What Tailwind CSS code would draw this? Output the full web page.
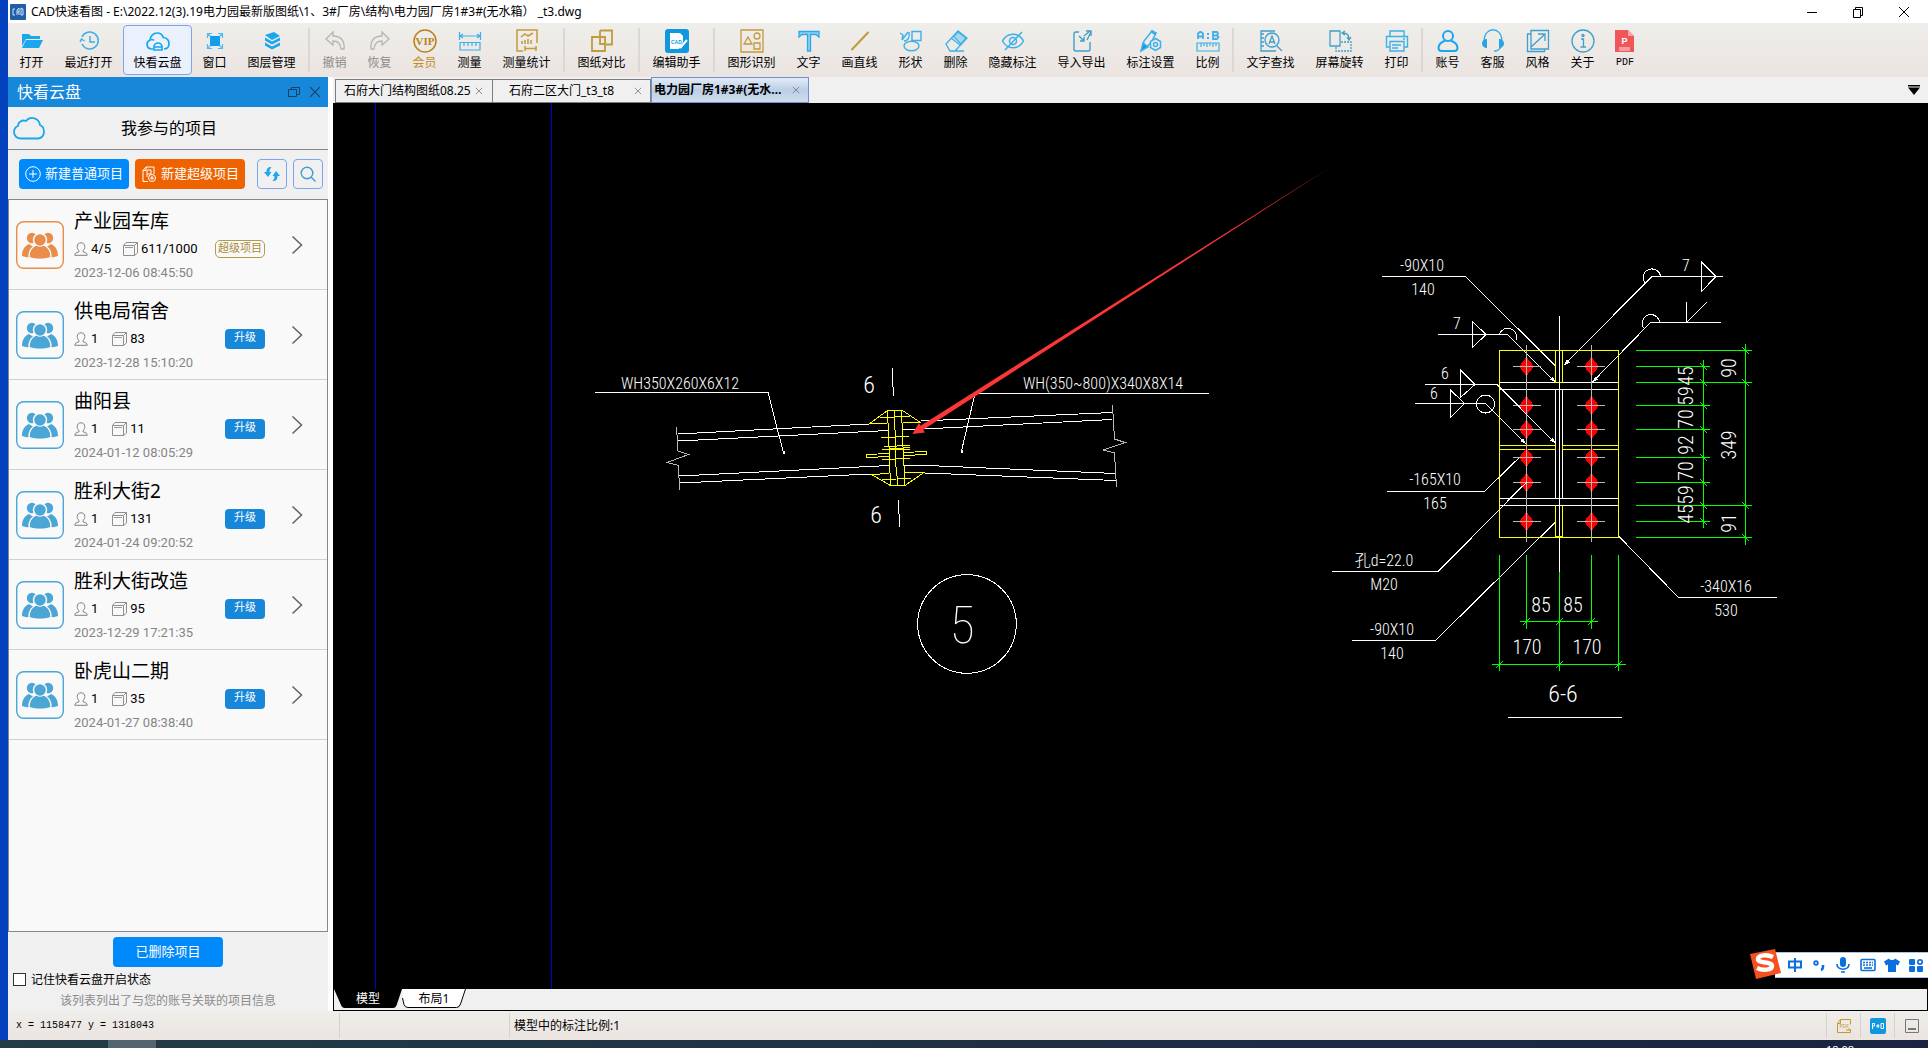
<!DOCTYPE html>
<html lang="zh-CN">
<head>
<meta charset="utf-8">
<title>CAD快速看图</title>
<script src="https://cdn.jsdelivr.net/npm/@tailwindcss/browser@4"></script>
</head>
<body class="flex h-screen flex-col overflow-hidden bg-[#0442bd] font-['Noto_Sans','Noto_Sans_CJK_SC',sans-serif] text-xs text-black">

<!-- shared symbols -->
<svg class="hidden" aria-hidden="true">
  <symbol id="team" viewBox="0 0 48 48">
    <rect x="0.7" y="0.7" width="46.6" height="46.6" rx="7" fill="none" stroke="currentColor" stroke-width="1.4"/>
    <circle cx="16" cy="17" r="5.2" fill="currentColor"/><circle cx="32" cy="17" r="5.2" fill="currentColor"/>
    <path d="M6 35c0-7 3-10 7-12l3 2h16l3-2c4 2 7 5 7 12-4 1.500-8 1.500-10 1H16c-3 .5-6 .5-10-1z" fill="currentColor"/>
    <path d="M13 36c0-7 3-10 7-12 1.500 1.500 6.500 1.500 8 0 4 2 7 5 7 12-6 2.500-16 2.500-22 0z" fill="currentColor" stroke="#f9f9f9" stroke-width="1.500"/>
    <circle cx="24" cy="19" r="6.500" fill="currentColor" stroke="#f9f9f9" stroke-width="1.500"/>
    <path d="M13.800 36c.2-6.500 3-9.500 6.500-11.200 2 1.200 5.400 1.200 7.400 0C31.200 26.500 34 29.500 34.200 36c-6 2-14.400 2-20.400 0z" fill="currentColor"/>
  </symbol>
  <symbol id="person" viewBox="0 0 14 14"><path d="M.8 13.300h12.400c0-2-1.200-2.600-4.200-3.500V8.500c1.400-1 1.800-2.500 1.800-4C10.800 2.200 9.300.8 7 .8S3.200 2.200 3.200 4.500c0 1.500.4 3 1.800 4v1.300C2 10.700.8 11.300.8 13.300z" fill="none" stroke="#808080"/></symbol>
  <symbol id="sheets" viewBox="0 0 15 15"><path d="M.5 4.500h11v10H.5zM.5 4.500l2.500-3h11.500V12L11.500 14.500M11.500 4.500l3-3" fill="none" stroke="#8f8f8f"/><path d="M2 6.500h8" stroke="#9a9a9a"/></symbol>
  <symbol id="next" viewBox="0 0 12 20"><path d="M1.500 1.500L10.500 10l-9 8.500" fill="none" stroke="#666" stroke-width="1.600"/></symbol>
  <symbol id="cross" viewBox="0 0 10 10"><path d="M1 1l8 8M9 1L1 9" fill="none" stroke="currentColor"/></symbol>
</svg>

<div class="flex min-h-0 flex-1 flex-col pl-2">

  <!-- title bar -->
  <header class="flex h-[23px] shrink-0 items-center bg-white pl-[2px]">
    <svg class="size-4" viewBox="0 0 16 16"><rect width="16" height="16" rx="1" fill="#1f5fa8"/><path d="M5 5H3v6h2M7 11V6l2-2v7M7 8h2M11 4v7h2V5z" stroke="#cfe4ff" fill="none"/></svg>
    <h1 class="flex-1 whitespace-pre pl-[5px] text-xs">CAD快速看图 - E:\2022.12(3).19电力园最新版图纸\1、3#厂房\结构\电力园厂房1#3#(无水箱） _t3.dwg</h1>
    <div class="flex items-center gap-[34px] pr-[18px]">
      <button aria-label="最小化"><svg class="size-3" viewBox="0 0 12 12"><path d="M1 6.500h10" stroke="#000"/></svg></button>
      <button aria-label="还原"><svg class="size-3" viewBox="0 0 12 12"><path d="M1.500 3.500h7v8h-7zM3.500 3.500v-2h7v8h-2" fill="none" stroke="#000"/></svg></button>
      <button aria-label="关闭"><svg class="size-3" viewBox="0 0 12 12"><path d="M1 1l10 10M11 1L1 11" stroke="#000"/></svg></button>
    </div>
  </header>

  <!-- toolbar -->
  <nav class="flex h-[54px] shrink-0 items-center whitespace-nowrap bg-linear-to-b from-[#efeeea] to-[#ebe4e1] pl-px leading-4">
    <button class="flex h-[50px] w-[45px] flex-col items-center gap-[2px] pt-1"><svg class="size-6" viewBox="0 0 24 24" fill="#1aa7ee"><path d="M2 5h7l2 2h9v3H6l-4 7z"/><path d="M6 11h17l-4 8H2z"/></svg>打开</button>
    <button class="flex h-[50px] w-[69px] flex-col items-center gap-[2px] pt-1"><svg class="size-6" viewBox="0 0 24 24" fill="none" stroke="#3bb0ea" stroke-width="1.500"><path d="M5 15a8.500 8.500 0 1 0 0-7M3 13l1.500-3L7.500 12M13 7v6h5"/></svg>最近打开</button>
    <button class="flex h-[50px] w-[69px] flex-col items-center gap-[2px] rounded-[4px] border border-[#7da4f0] bg-[#eaf1fd] pt-[3px]"><svg class="size-6" viewBox="0 0 24 24" fill="none" stroke="#1aa7ee" stroke-width="1.700"><path d="M7 20H5.500A4.500 4.500 0 0 1 4 11.300C4 7 7.500 4 11 4c3.500 0 5.500 2 6.300 4.500C21 9 23 11.500 23 14.500c0 3.500-2 5.500-5 5.500M4 11c1.500-.8 3-.5 4 .5M8 21v-3a4 4 0 0 1 8 0v3zM8 18h8"/></svg>快看云盘</button>
    <button class="flex h-[50px] w-[45px] flex-col items-center gap-[2px] pt-1"><svg class="size-6" viewBox="0 0 24 24"><rect x="7" y="7" width="10" height="10" fill="#0f9fec"/><path d="M4.500 9V4.500H9M15 4.500h4.500V9M19.500 15v4.500H15M9 19.500H4.500V15M4.500 4.500l3 3M19.500 4.500l-3 3M4.500 19.500l3-3M19.500 19.500l-3-3" fill="none" stroke="#4dbaf0" stroke-width="1.200"/></svg>窗口</button>
    <button class="flex h-[50px] w-[69px] flex-col items-center gap-[2px] pt-1"><svg class="size-6" viewBox="0 0 24 24" fill="#1aa7ee"><path d="M5 6l9-3 6 4-8 4z"/><path d="M5 8.500l7 4 8-4v3l-8 4-7-4z"/><path d="M5 13.500l7 4 8-4v3l-8 4-7-4z"/></svg>图层管理</button>
    <span class="mx-[2px] h-11 w-[2px] bg-[#dad7d4]"></span>
    <button class="flex h-[50px] w-[45px] flex-col items-center gap-[2px] pt-1 text-[#8c8c8c]"><svg class="size-6" viewBox="0 0 24 24" fill="none" stroke="#b5b5b5" stroke-width="1.300"><path d="M10 3L3 10l7 6v-4c5 0 7 2 8 8h3c1-8-3-13-11-13z"/></svg>撤销</button>
    <button class="flex h-[50px] w-[45px] flex-col items-center gap-[2px] pt-1 text-[#8c8c8c]"><svg class="size-6" viewBox="0 0 24 24" fill="none" stroke="#b5b5b5" stroke-width="1.300"><path d="M14 3l7 7-7 6v-4c-5 0-7 2-8 8H3C2 12 6 7 14 7z"/></svg>恢复</button>
    <button class="flex h-[50px] w-[45px] flex-col items-center gap-[2px] pt-1 text-[#c08d1f]"><svg class="size-6" viewBox="0 0 24 24"><circle cx="12" cy="12" r="11" fill="none" stroke="#b8841c" stroke-width="1.500"/><text x="12" y="16" text-anchor="middle" font-family="Liberation Serif" font-weight="700" font-size="11" fill="#b8841c">VIP</text></svg>会员</button>
    <button class="flex h-[50px] w-[45px] flex-col items-center gap-[2px] pt-1"><svg class="size-6" viewBox="0 0 24 24" fill="none" stroke="#3bb0ea" stroke-width="1.200"><path d="M1.500 3v8M22.500 3v8M2 7h20M5 5L2 7l3 2M19 5l3 2-3 2M2 13.500h20V21H2zM6 14v3M10 14v3M14 14v3M18 14v3"/></svg>测量</button>
    <button class="flex h-[50px] w-[69px] flex-col items-center gap-[2px] pt-1"><svg class="size-6" viewBox="0 0 24 24" fill="none" stroke="#c39a3c" stroke-width="1.500"><path d="M8 22H2V1h20v13M6 8l4-3 3 2 5-3M7 15v-3M10 15v-4M13 15v-5M16 15v-4M10 17v5M21 17v5M10 19.500h11"/></svg>测量统计</button>
    <span class="mx-[2px] h-11 w-[2px] bg-[#dad7d4]"></span>
    <button class="flex h-[50px] w-[69px] flex-col items-center gap-[2px] pt-1"><svg class="size-6" viewBox="0 0 24 24" fill="none" stroke="#c39a3c" stroke-width="1.800"><path d="M10 1.500h12v14h-6M10 1.500v6M2 8h13v14H2zM10 8v7h5"/></svg>图纸对比</button>
    <span class="mx-[2px] h-11 w-[2px] bg-[#dad7d4]"></span>
    <button class="flex h-[50px] w-[69px] flex-col items-center gap-[2px] pt-1"><svg class="size-6" viewBox="0 0 24 24"><rect width="24" height="24" rx="3" fill="#0f98e0"/><path d="M5 4h10l3 3v6l-4 7H5z" fill="#fff"/><path d="M15 19l7-8" stroke="#fff" stroke-width="2"/><text x="6" y="15" font-size="5" font-weight="700" fill="#0f98e0" font-family="Liberation Sans">CAD</text></svg>编辑助手</button>
    <span class="mx-[2px] h-11 w-[2px] bg-[#dad7d4]"></span>
    <button class="flex h-[50px] w-[69px] flex-col items-center gap-[2px] pt-1"><svg class="size-6" viewBox="0 0 24 24" fill="none" stroke="#c39a3c" stroke-width="1.300"><path d="M1 1h22v22H1zM4 15l4-7 4 7zM14 14h6v6h-6z"/><circle cx="17" cy="7" r="3"/></svg>图形识别</button>
    <button class="flex h-[50px] w-[45px] flex-col items-center gap-[2px] pt-1"><svg class="size-6" viewBox="0 0 24 24" fill="#8fd0f2" stroke="#2ea9e8" stroke-width="1.300"><path d="M2 2.500h20V8l-3-2.500h-5.500V22h-3V5.500H5L2 8z"/></svg>文字</button>
    <button class="flex h-[50px] w-[57px] flex-col items-center gap-[2px] pt-1"><svg class="size-6" viewBox="0 0 24 24" stroke="#c39a3c" stroke-width="2"><path d="M3.500 21L20.500 3"/></svg>画直线</button>
    <button class="flex h-[50px] w-[45px] flex-col items-center gap-[2px] pt-1"><svg class="size-6" viewBox="0 0 24 24" fill="none" stroke="#3bb0ea" stroke-width="1.400"><path d="M13 2.500h9v9h-9zM1 4l3 2-1 5 6-8M5 12c4 0 6-4 5-9"/><ellipse cx="12.500" cy="17" rx="7.500" ry="4.800"/></svg>形状</button>
    <button class="flex h-[50px] w-[45px] flex-col items-center gap-[2px] pt-1"><svg class="size-6" viewBox="0 0 24 24" fill="none" stroke="#3bb0ea" stroke-width="1.300"><path d="M2 15L14 2l9 7-12 13H6zM7 9l9 7M9 22h11"/><path d="M9.500 7.500L14 3l8 6-5 6z" fill="#a8d6ee"/></svg>删除</button>
    <button class="flex h-[50px] w-[69px] flex-col items-center gap-[2px] pt-1"><svg class="size-6" viewBox="0 0 24 24" fill="none" stroke="#3bb0ea" stroke-width="1.500"><path d="M1.500 12c5-9 16-9 21 0-5 9-16 9-21 0zM4 21L21 3"/><circle cx="12" cy="12" r="3.500"/></svg>隐藏标注</button>
    <button class="flex h-[50px] w-[69px] flex-col items-center gap-[2px] pt-1"><svg class="size-6" viewBox="0 0 24 24" fill="none" stroke="#3f9fcc" stroke-width="1.400"><path d="M9 3H6a2 2 0 0 0-2 2v15a2 2 0 0 0 2 2h12a2 2 0 0 0 2-2v-7M9 7l5 5M10 12h4V8M14 7l6-5M16 2h5v5M21 3l-4 8"/></svg>导入导出</button>
    <button class="flex h-[50px] w-[69px] flex-col items-center gap-[2px] pt-1"><svg class="size-6" viewBox="0 0 24 24" fill="none" stroke="#3bb0ea" stroke-width="1.500"><path d="M3 21L5 12l8-10 4 2-5 10z"/><path d="M2 22l2-8 5 4z" fill="#1a96dd"/><path d="M12 2l5 3" stroke-width="3"/><path d="M16.500 9.500l5 3v6l-5 3-5-3v-6z" fill="#eeecea"/><circle cx="16.500" cy="15.500" r="2"/></svg>标注设置</button>
    <button class="flex h-[50px] w-[45px] flex-col items-center gap-[2px] pt-1"><svg class="size-6" viewBox="0 0 24 24" fill="none" stroke="#3bb0ea" stroke-width="1.200"><path d="M1 14h22v8H1zM5 14v4M8 14v3M11 14v4M14 14v3M17 14v4M20 14v3"/><path d="M2 10V4.500L4 3h1l2 1.500V10M2 7.500h5M17 3h4l1 1.500-1 2h-4zm0 3.500h4l1.500 1.500-1.500 2h-4z" stroke-width="1.800"/><path d="M11 4h2v2h-2zM11 8h2v2h-2z" fill="#3bb0ea" stroke="none"/></svg>比例</button>
    <span class="mx-[2px] h-11 w-[2px] bg-[#dad7d4]"></span>
    <button class="flex h-[50px] w-[69px] flex-col items-center gap-[2px] pt-1"><svg class="size-6" viewBox="0 0 24 24" fill="none" stroke="#3f9fcc" stroke-width="1.300"><path d="M16 2H2v20h15M2 5h3M2 9h3M2 13h3M2 17h3M18 17l5 5M10 15l3-8 3 8M11 13h4"/><circle cx="13" cy="11" r="7"/></svg>文字查找</button>
    <button class="flex h-[50px] w-[69px] flex-col items-center gap-[2px] pt-1"><svg class="size-6" viewBox="0 0 24 24" fill="none" stroke="#3f9fcc" stroke-width="1.300"><path d="M2 2h10v15H2zM15 4c4 0 6 2 6 6M17 2l-3 2 3 2M19 8l2 3 2-3"/><path d="M13 13h10v9H8v-4" stroke-dasharray="2 1"/></svg>屏幕旋转</button>
    <button class="flex h-[50px] w-[45px] flex-col items-center gap-[2px] pt-1"><svg class="size-6" viewBox="0 0 24 24" fill="none" stroke="#3bb0ea" stroke-width="1.400"><path d="M5 7V2h14v5M5 18H1.500V7.500h21V18H19M5 12.500h14V22H5zM7 16h9M7 19h6M18 10h2"/></svg>打印</button>
    <span class="mx-[2px] h-11 w-[2px] bg-[#dad7d4]"></span>
    <button class="flex h-[50px] w-[45px] flex-col items-center gap-[2px] pt-1"><svg class="size-6" viewBox="0 0 24 24" fill="none" stroke="#1aa7ee" stroke-width="2"><circle cx="12" cy="7" r="5"/><path d="M9.500 11.500C5 13 2.500 16 2.500 19c0 2 1 3 3 3h13c2 0 3-1 3-3 0-3-2.500-6-7-7.500"/></svg>账号</button>
    <button class="flex h-[50px] w-[45px] flex-col items-center gap-[2px] pt-1"><svg class="size-6" viewBox="0 0 24 24" fill="none" stroke="#3bb0ea" stroke-width="1.300"><path d="M3 12c0-15 18-15 18 0M20 17c-1 4-3 5-7 5"/><path d="M6 10v9c-3 0-5-2-5-4.500S3 10 6 10zM18 10v9c3 0 5-2 5-4.500S21 10 18 10z" fill="#29a3e2" stroke="none"/></svg>客服</button>
    <button class="flex h-[50px] w-[45px] flex-col items-center gap-[2px] pt-1"><svg class="size-6" viewBox="0 0 24 24" fill="none" stroke="#3f9fcc" stroke-width="1.300"><path d="M5 5H1.500v17.500h17V20M5 1.500h17.500V20H5zM5 18L18 6M12 5h7v7"/></svg>风格</button>
    <button class="flex h-[50px] w-[45px] flex-col items-center gap-[2px] pt-1"><svg class="size-6" viewBox="0 0 24 24" fill="none" stroke="#3f9fcc" stroke-width="1.300"><circle cx="12" cy="12" r="11"/><path d="M10 10h2.500v8M9.500 18h5.500"/><circle cx="12" cy="6.500" r="1"/></svg>关于</button>
    <button class="flex h-[50px] w-10 flex-col items-center gap-[2px] pt-1 font-['Liberation_Mono',monospace] text-[10px]"><svg class="size-6" viewBox="0 0 24 24"><path d="M2 1h13l6 6v16H2z" fill="#f0575a"/><path d="M15 1v6h6z" fill="#f9a7a8"/><path d="M6 18h11v4H6z" fill="#f79c9d"/><text x="11.500" y="15" text-anchor="middle" font-size="9" font-weight="700" fill="#fff" font-family="Liberation Sans">P</text></svg>PDF</button>
  </nav>

  <div class="flex min-h-0 flex-1 bg-white">

    <!-- cloud drive panel -->
    <aside class="flex w-80 shrink-0 flex-col bg-[#f0f0f0]">
      <div class="flex h-[30px] items-center bg-[#1787da] pl-[9px] pr-[7px] text-base text-white">
        <h2 class="flex-1">快看云盘</h2>
        <button aria-label="浮动" class="mr-[9px]"><svg class="size-3" viewBox="0 0 12 12" fill="none" stroke="#16406b"><path d="M.5 3.500h8v7h-8zM3.500 3.500v-2h8v7h-3"/></svg></button>
        <button aria-label="关闭面板" class="text-[#16406b]"><svg class="size-3"><use href="#cross"/></svg></button>
      </div>
      <div class="flex h-[43px] items-center border-b border-[#828790] pl-[5px] pr-[35px]">
        <svg class="h-6 w-8" viewBox="0 0 32 24" fill="none" stroke="#1aa7ee" stroke-width="1.800"><path d="M8 22.500C4 22.500 1 20 1 16c0-3 1.500-5 4-6 0-4 4-6.500 8-5 4.500-5.500 13-3 14 4 2.500 1 4 3.500 4 7 0 4-3 6.500-6 6.500z"/></svg>
        <h3 class="flex-1 text-center text-base">我参与的项目</h3>
      </div>
      <div class="flex h-[49px] items-center pb-px pl-[11px] pr-[5px] text-[13px] text-white">
        <button class="flex h-[30px] w-[110px] items-center justify-center gap-1 rounded-[4px] bg-[#0089fa]"><svg class="size-4" viewBox="0 0 16 16" fill="none" stroke="#fff"><circle cx="8" cy="8" r="7.300"/><path d="M8 4v8M4 8h8"/></svg>新建普通项目</button>
        <button class="ml-[6px] flex h-[30px] w-[110px] items-center justify-center gap-1 rounded-[4px] bg-[#ee6300]"><svg class="size-4" viewBox="0 0 16 16" fill="none" stroke="#fff"><path d="M7 15.500H2v-11l3-3.500h8v7M5 1v3.500H2M6 4h4v4H6zM6 11V8"/><circle cx="11" cy="12" r="3.500"/><path d="M11 10v4M9 12h4"/></svg>新建超级项目</button>
        <button aria-label="刷新" class="ml-3 flex size-[30px] items-center justify-center rounded-[4px] border border-[#7da4f0]"><svg class="size-4" viewBox="0 0 16 16" fill="#1aa7ee"><path d="M7.500 1C3.500 1 2.500 3 2.500 6H0l4 5 3.500-5H5.500c0-2 .5-3.500 2-5z"/><path d="M8.500 15c4 0 5-2 5-5H16l-4-5-3.500 5h2c0 2-.5 3.500-2 5z"/></svg></button>
        <button aria-label="搜索" class="ml-[6px] flex size-[30px] items-center justify-center rounded-[4px] border border-[#7da4f0]"><svg class="size-4" viewBox="0 0 16 16" fill="none" stroke="#3f9fd0" stroke-width="1.400"><circle cx="7" cy="7" r="5.800"/><path d="M11 11l4.500 4.500"/></svg></button>
      </div>

      <ul class="min-h-0 flex-1 border border-[#828790] bg-[#f9f9f9]">
        <li class="flex h-[90px] items-center border-b border-[#d0d0d0] pl-[7px] pr-6">
          <svg class="size-12 text-[#e88d4a]"><use href="#team"/></svg>
          <div class="ml-[10px] flex-1"><p class="text-[19px] leading-[26px]">产业园车库</p>
            <div class="flex h-[30px] items-center font-['Roboto','Noto_Sans_CJK_SC',sans-serif] text-[13px]"><svg class="mr-[3px] size-[14px]"><use href="#person"/></svg>4/5<svg class="ml-3 mr-[3px] size-[15px]"><use href="#sheets"/></svg>611/1000<span class="ml-auto rounded-[5px] border border-[#b39a4e] px-[2px] text-[11px] leading-4 text-[#a98d3a]">超级项目</span></div>
            <time class="block font-['Roboto'] text-[13px] leading-[18px] text-[#858585]">2023-12-06 08:45:50</time></div>
          <a href="#p1" aria-label="打开项目" class="ml-[26px]"><svg class="h-5 w-3"><use href="#next"/></svg></a>
        </li>
        <li class="flex h-[90px] items-center border-b border-[#d0d0d0] pl-[7px] pr-6">
          <svg class="size-12 text-[#4ba5d5]"><use href="#team"/></svg>
          <div class="ml-[10px] flex-1"><p class="text-[19px] leading-[26px]">供电局宿舍</p>
            <div class="flex h-[30px] items-center font-['Roboto','Noto_Sans_CJK_SC',sans-serif] text-[13px]"><svg class="mr-[3px] size-[14px]"><use href="#person"/></svg>1<svg class="ml-[14px] mr-[3px] size-[15px]"><use href="#sheets"/></svg>83<button class="ml-auto h-5 w-10 rounded-[4px] bg-[#1787da] text-[11px] text-white">升级</button></div>
            <time class="block font-['Roboto'] text-[13px] leading-[18px] text-[#858585]">2023-12-28 15:10:20</time></div>
          <a href="#p2" aria-label="打开项目" class="ml-[26px]"><svg class="h-5 w-3"><use href="#next"/></svg></a>
        </li>
        <li class="flex h-[90px] items-center border-b border-[#d0d0d0] pl-[7px] pr-6">
          <svg class="size-12 text-[#4ba5d5]"><use href="#team"/></svg>
          <div class="ml-[10px] flex-1"><p class="text-[19px] leading-[26px]">曲阳县</p>
            <div class="flex h-[30px] items-center font-['Roboto','Noto_Sans_CJK_SC',sans-serif] text-[13px]"><svg class="mr-[3px] size-[14px]"><use href="#person"/></svg>1<svg class="ml-[14px] mr-[3px] size-[15px]"><use href="#sheets"/></svg>11<button class="ml-auto h-5 w-10 rounded-[4px] bg-[#1787da] text-[11px] text-white">升级</button></div>
            <time class="block font-['Roboto'] text-[13px] leading-[18px] text-[#858585]">2024-01-12 08:05:29</time></div>
          <a href="#p3" aria-label="打开项目" class="ml-[26px]"><svg class="h-5 w-3"><use href="#next"/></svg></a>
        </li>
        <li class="flex h-[90px] items-center border-b border-[#d0d0d0] pl-[7px] pr-6">
          <svg class="size-12 text-[#4ba5d5]"><use href="#team"/></svg>
          <div class="ml-[10px] flex-1"><p class="text-[19px] leading-[26px]">胜利大街2</p>
            <div class="flex h-[30px] items-center font-['Roboto','Noto_Sans_CJK_SC',sans-serif] text-[13px]"><svg class="mr-[3px] size-[14px]"><use href="#person"/></svg>1<svg class="ml-[14px] mr-[3px] size-[15px]"><use href="#sheets"/></svg>131<button class="ml-auto h-5 w-10 rounded-[4px] bg-[#1787da] text-[11px] text-white">升级</button></div>
            <time class="block font-['Roboto'] text-[13px] leading-[18px] text-[#858585]">2024-01-24 09:20:52</time></div>
          <a href="#p4" aria-label="打开项目" class="ml-[26px]"><svg class="h-5 w-3"><use href="#next"/></svg></a>
        </li>
        <li class="flex h-[90px] items-center border-b border-[#d0d0d0] pl-[7px] pr-6">
          <svg class="size-12 text-[#4ba5d5]"><use href="#team"/></svg>
          <div class="ml-[10px] flex-1"><p class="text-[19px] leading-[26px]">胜利大街改造</p>
            <div class="flex h-[30px] items-center font-['Roboto','Noto_Sans_CJK_SC',sans-serif] text-[13px]"><svg class="mr-[3px] size-[14px]"><use href="#person"/></svg>1<svg class="ml-[14px] mr-[3px] size-[15px]"><use href="#sheets"/></svg>95<button class="ml-auto h-5 w-10 rounded-[4px] bg-[#1787da] text-[11px] text-white">升级</button></div>
            <time class="block font-['Roboto'] text-[13px] leading-[18px] text-[#858585]">2023-12-29 17:21:35</time></div>
          <a href="#p5" aria-label="打开项目" class="ml-[26px]"><svg class="h-5 w-3"><use href="#next"/></svg></a>
        </li>
        <li class="flex h-[90px] items-center border-b border-[#d0d0d0] pl-[7px] pr-6">
          <svg class="size-12 text-[#4ba5d5]"><use href="#team"/></svg>
          <div class="ml-[10px] flex-1"><p class="text-[19px] leading-[26px]">卧虎山二期</p>
            <div class="flex h-[30px] items-center font-['Roboto','Noto_Sans_CJK_SC',sans-serif] text-[13px]"><svg class="mr-[3px] size-[14px]"><use href="#person"/></svg>1<svg class="ml-[14px] mr-[3px] size-[15px]"><use href="#sheets"/></svg>35<button class="ml-auto h-5 w-10 rounded-[4px] bg-[#1787da] text-[11px] text-white">升级</button></div>
            <time class="block font-['Roboto'] text-[13px] leading-[18px] text-[#858585]">2024-01-27 08:38:40</time></div>
          <a href="#p6" aria-label="打开项目" class="ml-[26px]"><svg class="h-5 w-3"><use href="#next"/></svg></a>
        </li>
      </ul>

      <div class="flex flex-col pt-[5px]">
        <button class="h-[30px] w-[110px] self-center rounded-[4px] bg-[#0089fa] text-[13px] text-white">已删除项目</button>
        <div class="flex h-[25px] items-center pl-[5px]"><input id="remember" type="checkbox" class="size-[13px] appearance-none border border-[#333] bg-white"><label for="remember" class="pl-[5px]">记住快看云盘开启状态</label></div>
        <p class="h-[19px] text-center leading-[18px] text-[#8c8c8c]">该列表列出了与您的账号关联的项目信息</p>
      </div>
    </aside>

    <!-- drawing area -->
    <main class="ml-[5px] flex min-w-0 flex-1 flex-col bg-[#f0f0f0]">
      <div class="flex h-[26px] shrink-0 items-end pl-[2px] pr-2">
        <button class="flex h-6 w-[158px] items-center justify-between border border-[#7d7d7d] pl-2 pr-[9px]">石府大门结构图纸08.25<svg class="size-2 text-[#777]"><use href="#cross"/></svg></button>
        <button class="flex h-6 w-[158px] items-center justify-between border border-l-0 border-[#7d7d7d] pl-4 pr-2">石府二区大门_t3_t8<svg class="size-2 text-[#777]"><use href="#cross"/></svg></button>
        <button class="flex h-[26px] w-[158px] items-center justify-between whitespace-nowrap border border-[#6d93cf] bg-linear-to-b from-[#e3ecf7] via-[#bccfe6] to-[#cfdcec] pl-[2px] pr-2 font-bold">电力园厂房1#3#(无水…<svg class="size-2 text-[#777]"><use href="#cross"/></svg></button>
        <button aria-label="更多图纸" class="mb-2 ml-auto"><svg class="h-[11px] w-3" viewBox="0 0 12 11"><path d="M0 1h12v1.500H0zM0 3.500h12L6 11z"/></svg></button>
      </div>

      <div class="relative min-h-0 flex-1 bg-black">
        <svg class="block size-full overflow-hidden" shape-rendering="crispEdges">
          <g transform="translate(-333 -103)" fill="none">
            <path d="M375.500 103V2000M551.500 103V2000" stroke="#0000d8"/>

            <!-- beam elevation -->
            <g stroke="#fff">
              <path d="M595 392.500H768L783.500 453M1208.500 393.500H975L961.500 451"/>
              <path d="M678 434L869 424M921 421L1112.500 412.500M678 441L888 430.500M903 430L1112.500 419.500M679 476L889 465.500M680 483L870.500 474M904 465.500H927L1116 473.500M925 473L1116 480.500"/>
              <path d="M892 368L893.500 396M898.500 500L899.500 527"/>
              <circle cx="967" cy="624" r="49.300"/>
            </g>
            <path d="M782.500 451h2v3h-2zM960.500 450h2v3h-2z" fill="#fff"/>
            <path d="M676.500 427L678 451 688.500 454.500 667 462.500 678.500 465.500 679.500 490M1112.500 405L1114.500 439 1125 442.500 1103.500 450 1114.500 453 1116.500 487" stroke="#b8b8b8"/>
            <path d="M869 424L887.500 410.500H902.500L920.500 422.500M880 417.500L910 416.500M869 424L887.500 423M902.500 422.500H920.500M887.500 410.500L889 446.500 890.500 485.500M894.500 410.500L896 467 898 485.500M901.500 410.500L903 446.500 905 485.500M881 437.500L909 436.500M884 446.500L910 445.500M882 449.500L910 447.500M882 449.500H910M882 459.500L910 458.500M889 453.500L866.500 454.500V457.500L889 456.500M903 452.500L926.500 451.500V454.500L904.500 455.500M870.500 474.500L889.500 473.500M870.500 474L890.500 485.500H905L924 472.500H904.500M882 479.500L911.500 478.500" stroke="#ff0"/>
            <path d="M1329 168L923.200 429.800 925 432.500 912.500 434 918.800 423 920.600 425.700z" fill="#fb3636" shape-rendering="auto"/>

            <!-- section 6-6 -->
            <g stroke="#fff">
              <path d="M1382 276.500H1465.500L1556 366.500M1438 334.500H1507.500L1555.500 382.500M1472.500 321.500V347.500L1486 334.500zM1425 384.500H1497L1555.500 443.500M1460.500 370V397.500L1475 384.500zM1415 403.500H1485.500L1526 444M1450.500 390V417.500L1464.500 403.500z"/>
              <path d="M1723 276.500H1652L1563.500 365.500M1701.500 262V291.500L1716 276.500zM1721 322.500H1650.500L1592 382.500M1686.500 302V322.500L1707 302"/>
              <path d="M1499.500 334A8.700 8.700 0 0 1 1516 340M1645 283A8.700 8.700 0 1 1 1660.500 276.500M1643.500 328A8.700 8.700 0 1 1 1659.500 322.500"/>
              <circle cx="1485.500" cy="404" r="9"/>
              <path d="M1387 491.500H1484.500L1526.500 450.500M1332 571.500H1438L1526.500 482M1352 640.500H1435.500L1556 521.500M1777 597.500H1678.500L1619 536.500"/>
              <path d="M1559.500 316V572M1555.500 389V498M1562.500 389V498M1499 382.500H1618M1499 389.500H1618M1499 498.500H1618M1499 505.500H1618M1508 717.500H1622"/>
            </g>
            <path d="M1555.500 382.500l-6-3 3-3zM1555.500 443.500l-6-3 3-3zM1526 444l-6-3 3-3zM1563.500 365.500l3-6 3 3zM1592 382.500l3-6 3 3z" fill="#fff"/>
            <path d="M1499.500 350.500H1618.500V537.500H1499.500zM1555.500 350V382.500H1562.500V350M1555.500 505V536.500H1562.500V505M1499 445.500H1555.500V449.500H1499M1618 445.500H1562.500V449.500H1618" stroke="#ff0"/>
            <g fill="#f00">
              <path d="M1519 366.500L1526.500 357 1534 366.500 1526.500 376zM1519 405.500L1526.500 396 1534 405.500 1526.500 415zM1519 429.500L1526.500 420 1534 429.500 1526.500 439zM1519 457.500L1526.500 448 1534 457.500 1526.500 467zM1519 482.500L1526.500 473 1534 482.500 1526.500 492zM1519 521.500L1526.500 512 1534 521.500 1526.500 531z"/>
              <path d="M1584 366.500L1591.500 357 1599 366.500 1591.500 376zM1584 405.500L1591.500 396 1599 405.500 1591.500 415zM1584 429.500L1591.500 420 1599 429.500 1591.500 439zM1584 457.500L1591.500 448 1599 457.500 1591.500 467zM1584 482.500L1591.500 473 1599 482.500 1591.500 492zM1584 521.500L1591.500 512 1599 521.500 1591.500 531z"/>
            </g>
            <path d="M1526.500 345V542M1591.500 345V542M1513 366.500h28M1513 405.500h28M1513 429.500h28M1513 457.500h28M1513 482.500h28M1513 521.500h28M1577 366.500h28M1577 405.500h28M1577 429.500h28M1577 457.500h28M1577 482.500h28M1577 521.500h28" stroke="#b8b8b8"/>
            <path d="M1497 384.500L1555.500 443.500M1438 571.500L1527 482" stroke="#fff"/>

            <!-- dimension lines -->
            <g stroke="#0f0">
              <path d="M1636 350.500H1752M1636 382.500H1752M1636 505.500H1752M1636 537.500H1752M1636 366.500H1710M1636 405.500H1710M1636 429.500H1710M1636 457.500H1710M1636 482.500H1710M1636 521.500H1710M1703.500 360V528M1745.500 344V545"/>
              <path d="M1499.500 555V671M1618.500 555V671M1559.500 572V671M1526.500 555V629M1591.500 555V629M1520 621.500H1598M1492 664.500H1626"/>
              <path d="M1742 347l7 7M1742 379l7 7M1742 502l7 7M1742 534l7 7M1700 363l7 7M1700 379l7 7M1700 402l7 7M1700 426l7 7M1700 454l7 7M1700 479l7 7M1700 502l7 7M1700 518l7 7"/>
              <path d="M1496 668l7-7M1556 668l7-7M1615 668l7-7M1523 625l7-7M1556 625l7-7M1588 625l7-7"/>
            </g>

            <!-- annotations -->
            <g class="fill-white font-['Roboto_Condensed','Noto_Sans_CJK_SC',sans-serif] font-light" text-anchor="middle" shape-rendering="auto">
              <g class="text-base">
                <text x="680" y="389">WH350X260X6X12</text>
                <text x="1103" y="389">WH(350~800)X340X8X14</text>
                <text x="1422" y="271">-90X10</text><text x="1423" y="295">140</text>
                <text x="1457" y="329">7</text><text x="1686" y="271">7</text>
                <text x="1445" y="379">6</text><text x="1434" y="399">6</text>
                <text x="1435" y="485">-165X10</text><text x="1435" y="509">165</text>
                <text x="1384" y="566">孔d=22.0</text><text x="1384" y="590">M20</text>
                <text x="1392" y="635">-90X10</text><text x="1392" y="659">140</text>
                <text x="1726" y="592">-340X16</text><text x="1726" y="616">530</text>
              </g>
              <g class="text-xl">
                <text x="1541" y="612">85</text><text x="1573" y="612">85</text>
                <text x="1527" y="654">170</text><text x="1587" y="654">170</text>
                <text transform="translate(1693 376) rotate(-90)">45</text>
                <text transform="translate(1693 396) rotate(-90)">59</text>
                <text transform="translate(1693 419) rotate(-90)">70</text>
                <text transform="translate(1693 445) rotate(-90)">92</text>
                <text transform="translate(1693 471) rotate(-90)">70</text>
                <text transform="translate(1693 495) rotate(-90)">59</text>
                <text transform="translate(1693 514) rotate(-90)">45</text>
                <text transform="translate(1736 368) rotate(-90)">90</text>
                <text transform="translate(1736 445) rotate(-90)">349</text>
                <text transform="translate(1736 523) rotate(-90)">91</text>
              </g>
              <g class="text-2xl">
                <text x="869" y="393">6</text><text x="876" y="523">6</text><text x="1563" y="702">6-6</text>
              </g>
              <text x="962" y="643" class="text-[52px] font-thin">5</text>
            </g>
          </g>
        </svg>

        <!-- input method bar floats over the drawing -->
        <div class="absolute bottom-[11px] right-0 flex h-[26px] w-[153px] items-center justify-between border-y border-[#a9c4ea] bg-white pl-3 pr-1 text-[#0b6fe0]">
          <svg class="absolute -left-[26px] -top-[5px] size-8" viewBox="0 0 32 32"><path d="M1 6L26 1 32 25 7 31z" fill="#f4511e"/><path d="M24 9c-6-3-15-2-15 2 0 5 14 2 14 7 0 4-9 5-15 2" fill="none" stroke="#fff" stroke-width="4.500"/></svg>
          <svg class="size-4" viewBox="0 0 16 16" fill="none" stroke="currentColor" stroke-width="2"><path d="M2 4.500h12v6H2zM8 1v14"/></svg>
          <svg class="size-4" viewBox="0 0 16 16" fill="none" stroke="currentColor" stroke-width="1.800"><circle cx="5" cy="6" r="1.800"/><path d="M12 8v1.500c0 2-.5 3-2 3.500" stroke-width="2.500"/></svg>
          <svg class="size-4" viewBox="0 0 16 16" fill="currentColor"><rect x="5" y="0" width="6" height="10" rx="3"/><path d="M2 7c0 7 12 7 12 0M6 15h4" fill="none" stroke="currentColor" stroke-width="1.700"/></svg>
          <svg class="size-4" viewBox="0 0 16 16" fill="none" stroke="currentColor" stroke-width="1.600"><rect x="1" y="2.500" width="14" height="11" rx="1"/><path d="M3 5.500h10M3 8h10" stroke-dasharray="2 1"/><path d="M4 11h8"/></svg>
          <svg class="size-4" viewBox="0 0 16 16" fill="currentColor"><path d="M5 1.500c1 2 5 2 6 0l5 3-2 4-2-1V15H4V7.500l-2 1-2-4z"/></svg>
          <svg class="size-4" viewBox="0 0 16 16" fill="currentColor"><rect x="1" y="2" width="6" height="6" rx="1"/><rect x="1" y="9" width="6" height="6" rx="1"/><rect x="9" y="9" width="6" height="6" rx="1"/><circle cx="12" cy="5" r="2.200" fill="none" stroke="currentColor" stroke-width="1.700"/></svg>
        </div>
      </div>

      <div class="flex h-[22px] shrink-0 border-x border-b border-black">
        <button class="relative flex h-[19px] w-[68px] items-center justify-center text-white"><svg class="absolute inset-0 size-full" viewBox="0 0 68 19" preserveAspectRatio="none"><path d="M0 0h68l-5 15q-1 4-4 4H11q-3 0-4-3z"/></svg><span class="relative">模型</span></button>
        <button class="relative flex h-[19px] w-[64px] items-center justify-center"><svg class="absolute inset-0 size-full" viewBox="0 0 64 19" preserveAspectRatio="none"><path d="M0 0h63.500l-5 15q-1 3.500-4 3.500H6q-3 0-4-3z" fill="#fff"/><path d="M63.500 0l-5 15q-1 3.500-4 3.500H6q-3 0-4-3L.5 9" fill="none" stroke="#000"/></svg><span class="relative">布局1</span></button>
      </div>
    </main>
  </div>

  <!-- status bar -->
  <footer class="flex h-[29px] shrink-0 items-center bg-linear-to-b from-[#efeeea] to-[#ebe4e1]">
    <output class="w-[331px] whitespace-nowrap pl-2 font-['Liberation_Mono',monospace] text-[10px]">x = 1158477 y = 1318043</output>
    <span class="h-[25px] w-[170px] border-l border-[#d4d1ce]"></span>
    <span class="flex h-[25px] flex-1 items-center border-l border-[#d4d1ce] pl-1">模型中的标注比例:1</span>
    <button aria-label="转PDF" class="flex h-[25px] w-[34px] items-center justify-center border-l border-[#d4d1ce]"><svg class="size-[14px]" viewBox="0 0 14 14" fill="none" stroke="#c4982f"><path d="M3.500 .5h10v5M13.500 10.500v3H.5v-9l3-4v4h-3M9 11h4.500l-2-1.500"/><text x="2.500" y="9" font-size="5" fill="#c4982f" stroke="none">PDF</text></svg></button>
    <button aria-label="P+D" class="flex h-[25px] w-[34px] items-center justify-center border-l border-[#d4d1ce]"><svg class="size-4" viewBox="0 0 16 16"><rect width="16" height="16" rx="2" fill="#0f98e0"/><path d="M2.500 11V5.500h2V8h-2M6 8h3.500M8 6v4M11 5.500h2.500v5H11z" fill="none" stroke="#fff"/></svg></button>
    <button aria-label="显示任务栏" class="flex h-[25px] w-[34px] items-center justify-center border-l border-[#d4d1ce]"><svg class="size-[14px]" viewBox="0 0 14 14"><path d="M.5.500h13v13H.5z" fill="none" stroke="#777"/><path d="M3 10h8" stroke="#777" stroke-width="2"/></svg></button>
  </footer>
</div>

<!-- top edge of the system task bar -->
<div class="flex h-2 shrink-0 overflow-hidden bg-linear-to-r from-[#243c46] to-[#1a2442]">
  <span class="ml-[108px] w-12 bg-[#53656f]"></span>
  <time class="ml-auto mr-[74px] pt-[2px] text-[11px] leading-4 text-white">18:08</time>
</div>
</body>
</html>
